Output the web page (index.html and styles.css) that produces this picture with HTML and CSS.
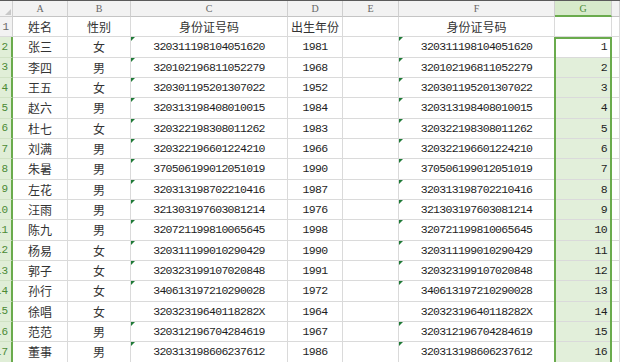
FILE: index.html
```html
<!DOCTYPE html>
<html lang="zh-CN">
<head>
    <meta charset="UTF-8">
    <meta name="viewport" content="width=device-width, initial-scale=1.0">
    <title>身份证号码</title>
    <link rel="stylesheet" href="styles.css">
</head>
<body>
    <div class="sheet">
        <!-- 列标题 -->
        <div class="corner"><span class="tri"></span></div>
        <div class="colhd">A</div>
        <div class="colhd">B</div>
        <div class="colhd">C</div>
        <div class="colhd">D</div>
        <div class="colhd">E</div>
        <div class="colhd">F</div>
        <div class="colhd sel">G</div>
        <div class="colhd"></div>

        <!-- 第1行 -->
        <div class="rowhd"><span>1</span></div>
        <div class="cell">姓名</div>
        <div class="cell">性别</div>
        <div class="cell">身份证号码</div>
        <div class="cell">出生年份</div>
        <div class="cell"></div>
        <div class="cell">身份证号码</div>
        <div class="cell"></div>
        <div class="cell"></div>

        <div class="rowhd sel"><span>2</span></div>
        <div class="cell">张三</div><div class="cell">女</div>
        <div class="cell num txt">320311198104051620</div><div class="cell num">1981</div><div class="cell"></div>
        <div class="cell num txt">320311198104051620</div><div class="cell num val active">1</div><div class="cell"></div>

        <div class="rowhd sel"><span>3</span></div>
        <div class="cell">李四</div><div class="cell">男</div>
        <div class="cell num txt">320102196811052279</div><div class="cell num">1968</div><div class="cell"></div>
        <div class="cell num txt">320102196811052279</div><div class="cell num val">2</div><div class="cell"></div>

        <div class="rowhd sel"><span>4</span></div>
        <div class="cell">王五</div><div class="cell">女</div>
        <div class="cell num txt">320301195201307022</div><div class="cell num">1952</div><div class="cell"></div>
        <div class="cell num txt">320301195201307022</div><div class="cell num val">3</div><div class="cell"></div>

        <div class="rowhd sel"><span>5</span></div>
        <div class="cell">赵六</div><div class="cell">男</div>
        <div class="cell num txt">320313198408010015</div><div class="cell num">1984</div><div class="cell"></div>
        <div class="cell num txt">320313198408010015</div><div class="cell num val">4</div><div class="cell"></div>

        <div class="rowhd sel"><span>6</span></div>
        <div class="cell">杜七</div><div class="cell">女</div>
        <div class="cell num txt">320322198308011262</div><div class="cell num">1983</div><div class="cell"></div>
        <div class="cell num txt">320322198308011262</div><div class="cell num val">5</div><div class="cell"></div>

        <div class="rowhd sel"><span>7</span></div>
        <div class="cell">刘满</div><div class="cell">男</div>
        <div class="cell num txt">320322196601224210</div><div class="cell num">1966</div><div class="cell"></div>
        <div class="cell num txt">320322196601224210</div><div class="cell num val">6</div><div class="cell"></div>

        <div class="rowhd sel"><span>8</span></div>
        <div class="cell">朱暑</div><div class="cell">男</div>
        <div class="cell num txt">370506199012051019</div><div class="cell num">1990</div><div class="cell"></div>
        <div class="cell num txt">370506199012051019</div><div class="cell num val">7</div><div class="cell"></div>

        <div class="rowhd sel"><span>9</span></div>
        <div class="cell">左花</div><div class="cell">男</div>
        <div class="cell num txt">320313198702210416</div><div class="cell num">1987</div><div class="cell"></div>
        <div class="cell num txt">320313198702210416</div><div class="cell num val">8</div><div class="cell"></div>

        <div class="rowhd sel"><span>10</span></div>
        <div class="cell">汪雨</div><div class="cell">男</div>
        <div class="cell num txt">321303197603081214</div><div class="cell num">1976</div><div class="cell"></div>
        <div class="cell num txt">321303197603081214</div><div class="cell num val">9</div><div class="cell"></div>

        <div class="rowhd sel"><span>11</span></div>
        <div class="cell">陈九</div><div class="cell">男</div>
        <div class="cell num txt">320721199810065645</div><div class="cell num">1998</div><div class="cell"></div>
        <div class="cell num txt">320721199810065645</div><div class="cell num val">10</div><div class="cell"></div>

        <div class="rowhd sel"><span>12</span></div>
        <div class="cell">杨易</div><div class="cell">女</div>
        <div class="cell num txt">320311199010290429</div><div class="cell num">1990</div><div class="cell"></div>
        <div class="cell num txt">320311199010290429</div><div class="cell num val">11</div><div class="cell"></div>

        <div class="rowhd sel"><span>13</span></div>
        <div class="cell">郭子</div><div class="cell">女</div>
        <div class="cell num txt">320323199107020848</div><div class="cell num">1991</div><div class="cell"></div>
        <div class="cell num txt">320323199107020848</div><div class="cell num val">12</div><div class="cell"></div>

        <div class="rowhd sel"><span>14</span></div>
        <div class="cell">孙行</div><div class="cell">女</div>
        <div class="cell num txt">340613197210290028</div><div class="cell num">1972</div><div class="cell"></div>
        <div class="cell num txt">340613197210290028</div><div class="cell num val">13</div><div class="cell"></div>

        <div class="rowhd sel"><span>15</span></div>
        <div class="cell">徐唱</div><div class="cell">女</div>
        <div class="cell num">32032319640118282X</div><div class="cell num">1964</div><div class="cell"></div>
        <div class="cell num">32032319640118282X</div><div class="cell num val">14</div><div class="cell"></div>

        <div class="rowhd sel"><span>16</span></div>
        <div class="cell">范范</div><div class="cell">男</div>
        <div class="cell num txt">320312196704284619</div><div class="cell num">1967</div><div class="cell"></div>
        <div class="cell num txt">320312196704284619</div><div class="cell num val">15</div><div class="cell"></div>

        <div class="rowhd sel"><span>17</span></div>
        <div class="cell">董事</div><div class="cell">男</div>
        <div class="cell num txt">320313198606237612</div><div class="cell num">1986</div><div class="cell"></div>
        <div class="cell num txt">320313198606237612</div><div class="cell num val">16</div><div class="cell"></div>

        <!-- 选区边框 G2:G17 -->
        <div class="selection"></div>
    </div>
</body>
</html>
```

FILE: styles.css
```css
body {
    margin: 0;
    background: #fff;
    overflow: hidden;
}
.sheet {
    position: relative;
    display: grid;
    grid-template-columns: 13px 55px 63px 157px 55px 56px 156px 57px 1fr;
    grid-template-rows: 16px repeat(17, 20.33px);
    border-top: 1px solid #5a5a5a;
    font-family: "Noto Sans CJK SC", sans-serif;
    font-size: 12px;
    color: #333;
}
.sheet > div {
    box-sizing: border-box;
    border-right: 1px solid #dadada;
    border-bottom: 1px solid #dadada;
    display: flex;
    align-items: center;
    justify-content: center;
    white-space: nowrap;
    overflow: hidden;
}
.corner {
    background: #f2f2f2;
    position: relative;
    border-color: #cfcfcf !important;
}
.corner .tri {
    position: absolute;
    right: 1px;
    bottom: 1px;
    border-bottom: 6px solid #c8c8c8;
    border-left: 6px solid transparent;
}
.colhd {
    background: #f2f2f2;
    font-family: "Liberation Serif", serif;
    font-size: 10px;
    color: #666;
    border-right-color: #cfcfcf !important;
    border-bottom-color: #c4c4c4 !important;
}
.colhd.sel {
    background: #d7eacb;
    color: #4b8a35;
    border-bottom: 2px solid #6aab4d !important;
}
.rowhd {
    background: #f2f2f2;
    font-family: "Liberation Mono", monospace;
    font-size: 11px;
    color: #666;
    justify-content: flex-end !important;
    padding-right: 3px;
    border-right-color: #cfcfcf !important;
}
.rowhd.sel {
    background: #e0eed7;
    color: #4b8a35;
    border-right: 2px solid #6aab4d !important;
    border-bottom-color: #d0e2c4 !important;
}
.num {
    font-family: "Liberation Mono", monospace;
    font-size: 11.5px;
    letter-spacing: -0.7px;
    color: #1e1e1e;
}
.txt {
    position: relative;
}
.txt::before {
    content: "";
    position: absolute;
    left: 0;
    top: 0;
    border-top: 4px solid #1f7a37;
    border-right: 4px solid transparent;
}
.val {
    background: #e2efda;
    justify-content: flex-end !important;
    padding-right: 4px;
}
.val.active {
    background: #fff;
}
.selection {
    position: absolute;
    left: 554px;
    width: 58px;
    top: 36px;
    bottom: 0;
    box-sizing: border-box;
    border: 2px solid #6aab4d !important;
    border-bottom: none !important;
    background: transparent;
    z-index: 2;
}
```
